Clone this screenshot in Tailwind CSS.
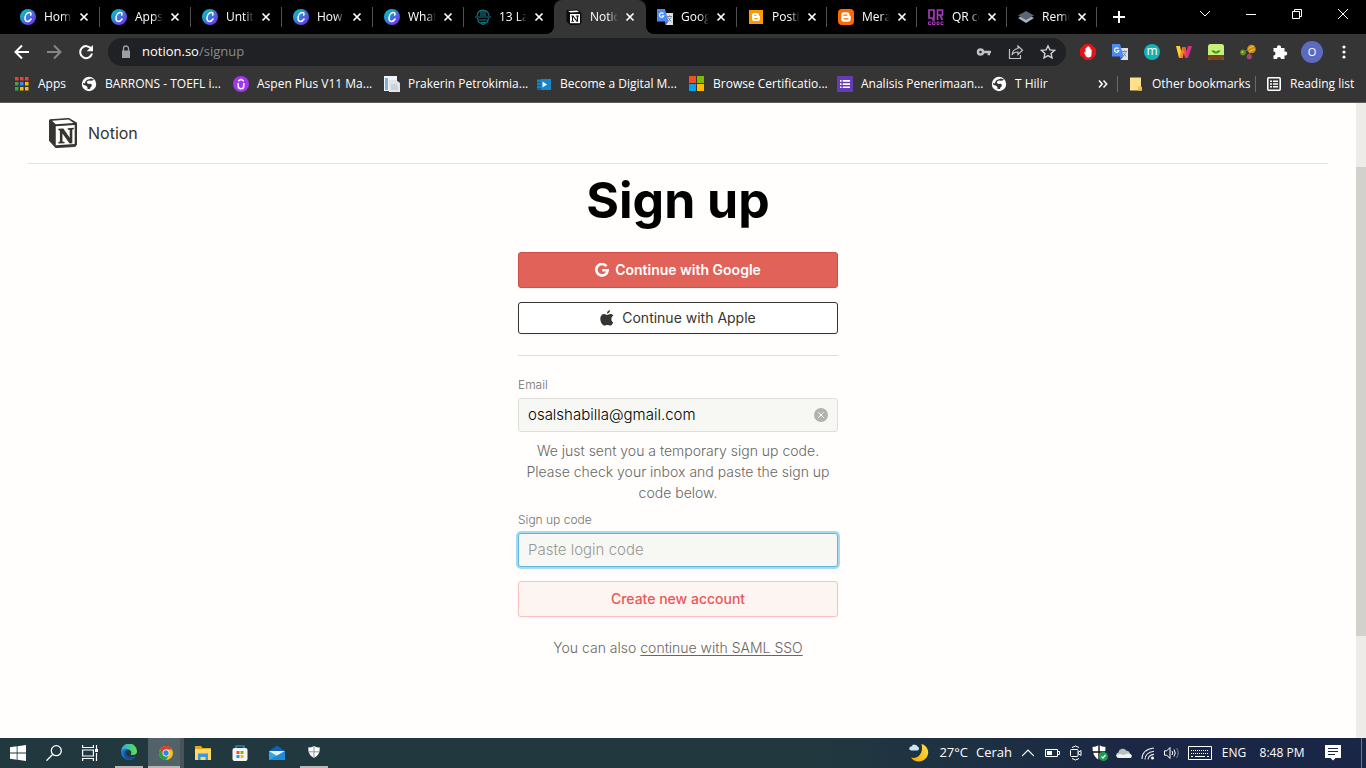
<!DOCTYPE html>
<html lang="en">
<head>
<meta charset="utf-8">
<meta name="viewport" content="width=device-width, initial-scale=1">
<title>Notion – Sign up</title>
<script src="https://cdn.jsdelivr.net/npm/@tailwindcss/browser@4"></script>
</head>
<body class="h-screen flex flex-col overflow-hidden bg-[#fffefc] font-['Open_Sans',sans-serif] text-xs text-white">

<!-- Shared icon symbols -->
<svg class="absolute size-0" aria-hidden="true">
  <defs>
    <linearGradient id="canva" x1="0" y1="0" x2="1" y2="1"><stop offset="0.1" stop-color="#00c4cc"/><stop offset="0.9" stop-color="#7d2ae8"/></linearGradient>
    <linearGradient id="edge" x1="0" y1="0" x2="1" y2="0"><stop offset="0" stop-color="#2aa7e0"/><stop offset="1" stop-color="#5fe04f"/></linearGradient>
    <linearGradient id="moon" x1="1" y1="0" x2="0" y2="1"><stop offset="0" stop-color="#ffe24a"/><stop offset="1" stop-color="#f5a800"/></linearGradient>
    <symbol id="i-canva" viewBox="0 0 16 16"><circle cx="8" cy="8" r="8" fill="url(#canva)"/><path d="M10.700 6.200c1-1.700-.1-3-1.700-2.700C6.600 3.900 5 6.700 5 9.200c0 4 3.800 4.200 6.100.8" fill="none" stroke="#fff" stroke-width="1.500" stroke-linecap="round"/></symbol>
    <symbol id="i-x" viewBox="0 0 16 16"><path d="M4.500 4.500l7 7M11.500 4.500l-7 7" stroke="#fff" stroke-width="1.700" fill="none"/></symbol>
    <symbol id="i-translate" viewBox="0 0 16 16"><path d="M6 4h10v12H9z" fill="#dcdfe3"/><path d="M0 0h8l3.500 12.500H0z" fill="#4b8bf5"/><path d="M8.500 16l3-3.500H7.500z" fill="#3367d6"/><path d="M6.500 4.800a2.200 2.200 0 1 0 .3 2H4.800" fill="none" stroke="#fff" stroke-width="1.100"/><path d="M10 7.500h5M12.500 6.500v1M11 8.500l3 4M14 8.500l-3 4" stroke="#74869a" fill="none"/></symbol>
    <symbol id="i-globe" viewBox="0 0 16 16"><circle cx="8" cy="8" r="7.200" fill="#fff"/><path d="M13 3.500Q11 5.500 8.500 4.500 5.500 4.500 6 7q1 1.200 3 .8 2.500.2 1.500 2.700-1.500.5-1.500 2.500L6.500 13q.5-2-1-3L2 8.500V7l2 .5Q4 4 8 3.200l2-.7z" fill="#353535"/></symbol>
    <symbol id="i-notion" viewBox="1 1 28 29"><path d="M2.500 2.800L20.500 1.500l7.500 4.300v20.700l-1.500 2L8 29.500l-6-6.500V3.300z" fill="#37352f" stroke="#37352f" stroke-linejoin="round"/><path d="M4.500 3.600l16-1.100 4.800 3.300L8 7z" fill="#fff"/><path d="M8 9l18.300-1.200v18.400L8 27.300z" fill="#fff"/><path d="M10.500 11.500l4.800-.3 6.200 9V12.500l-2-.500v-1.200l6-.300v1.200l-1.500.700v13l-2.700.300-6.800-9.700v7.700l2 .500v1.200l-6 .300v-1.200l1.500-.700V13.300l-1.500-.600z" fill="#37352f"/></symbol>
  </defs>
</svg>

<!-- Tab strip -->
<header class="shrink-0">
  <div class="flex h-[34px] bg-black pl-[9px]">
    <div role="tablist" class="flex">
      <div role="tab" class="flex w-[91px] items-center pl-[11px]"><svg class="size-4 shrink-0"><use href="#i-canva"/></svg><span class="ml-2 w-7 overflow-hidden whitespace-nowrap mask-r-from-65% mask-r-to-100%">Home</span><button aria-label="Close tab" class="ml-1"><svg class="size-4"><use href="#i-x"/></svg></button><span class="ml-[7px] h-5 w-px bg-[#505050]"></span></div>
      <div role="tab" class="flex w-[91px] items-center pl-[11px]"><svg class="size-4 shrink-0"><use href="#i-canva"/></svg><span class="ml-2 w-7 overflow-hidden whitespace-nowrap mask-r-from-65% mask-r-to-100%">Apps</span><button aria-label="Close tab" class="ml-1"><svg class="size-4"><use href="#i-x"/></svg></button><span class="ml-[7px] h-5 w-px bg-[#505050]"></span></div>
      <div role="tab" class="flex w-[91px] items-center pl-[11px]"><svg class="size-4 shrink-0"><use href="#i-canva"/></svg><span class="ml-2 w-7 overflow-hidden whitespace-nowrap mask-r-from-65% mask-r-to-100%">Untitled</span><button aria-label="Close tab" class="ml-1"><svg class="size-4"><use href="#i-x"/></svg></button><span class="ml-[7px] h-5 w-px bg-[#505050]"></span></div>
      <div role="tab" class="flex w-[91px] items-center pl-[11px]"><svg class="size-4 shrink-0"><use href="#i-canva"/></svg><span class="ml-2 w-7 overflow-hidden whitespace-nowrap mask-r-from-65% mask-r-to-100%">How</span><button aria-label="Close tab" class="ml-1"><svg class="size-4"><use href="#i-x"/></svg></button><span class="ml-[7px] h-5 w-px bg-[#505050]"></span></div>
      <div role="tab" class="flex w-[91px] items-center pl-[11px]"><svg class="size-4 shrink-0"><use href="#i-canva"/></svg><span class="ml-2 w-7 overflow-hidden whitespace-nowrap mask-r-from-65% mask-r-to-100%">What</span><button aria-label="Close tab" class="ml-1"><svg class="size-4"><use href="#i-x"/></svg></button><span class="ml-[7px] h-5 w-px bg-[#505050]"></span></div>
      <div role="tab" class="flex w-[90px] items-center pl-[11px]"><svg class="size-4 shrink-0" viewBox="0 0 16 16" fill="none" stroke="#17788a" stroke-width="1.100"><path d="M2 7a6 6 0 0 1 12 0M0 8h16M6 2v5M8 1v6M10 2v5M2.500 9l1 4L8 15.500l4.500-2.500 1-4M4 11h8M6 13.500h4"/></svg><span class="ml-2 w-7 overflow-hidden whitespace-nowrap mask-r-from-65% mask-r-to-100%">13 Lang</span><button aria-label="Close tab" class="ml-1"><svg class="size-4"><use href="#i-x"/></svg></button></div>
      <div role="tab" aria-selected="true" class="relative flex w-[92px] items-center rounded-t-lg bg-[#353535] pl-3"><svg class="absolute bottom-0 -left-2 size-2" viewBox="0 0 8 8"><path d="M8 0v8H0a8 8 0 0 0 8-8z" fill="#353535"/></svg><svg class="absolute bottom-0 -right-2 size-2" viewBox="0 0 8 8"><path d="M0 0v8h8a8 8 0 0 1-8-8z" fill="#353535"/></svg><svg class="size-4 shrink-0" viewBox="0 0 16 16"><path d="M1 1.500L11 1l3 2 1 1v10l-1 1-10 .500-3-3z" fill="#0c0c0c" stroke="#0c0c0c"/><path d="M2 2l9-.500L13 3 4.500 3.500z" fill="#fff"/><path d="M4 5h10v9.200H4z" fill="#fff"/><path d="M5.300 6.500h2l3.500 4.800V7.500h-1v-1h3v1h-.7v5.200h-1.500L7 8v3.700h1v1H5.300v-1H6V7.500h-.7z" fill="#111"/></svg><span class="ml-2 w-7 overflow-hidden whitespace-nowrap mask-r-from-65% mask-r-to-100%">Notion</span><button aria-label="Close tab" class="ml-1"><svg class="size-4"><use href="#i-x"/></svg></button></div>
      <div role="tab" class="flex w-[91px] items-center pl-[11px]"><svg class="size-4 shrink-0"><use href="#i-translate"/></svg><span class="ml-2 w-7 overflow-hidden whitespace-nowrap mask-r-from-65% mask-r-to-100%">Google</span><button aria-label="Close tab" class="ml-1"><svg class="size-4"><use href="#i-x"/></svg></button><span class="ml-[7px] h-5 w-px bg-[#505050]"></span></div>
      <div role="tab" class="flex w-[90px] items-center pl-[11px]"><svg class="size-4 shrink-0" viewBox="0 0 16 16"><path d="M1 1h14v14H1z" fill="#f90"/><path d="M4 6a2 2 0 0 1 2-2h3a2 2 0 0 1 2 2v.700h.500q.5 0 .5.500V10a2 2 0 0 1-2 2H6a2 2 0 0 1-2-2z" fill="#fff"/><path d="M6.300 6.300h2M6.300 9.700h3.400" stroke="#f90" stroke-width="1.200"/></svg><span class="ml-2 w-7 overflow-hidden whitespace-nowrap mask-r-from-65% mask-r-to-100%">Posting</span><button aria-label="Close tab" class="ml-1"><svg class="size-4"><use href="#i-x"/></svg></button><span class="ml-1.5 h-5 w-px bg-[#505050]"></span></div>
      <div role="tab" class="flex w-[90px] items-center pl-[11px]"><svg class="size-4 shrink-0" viewBox="0 0 16 16"><rect width="16" height="16" rx="4" fill="#ff6a00"/><path d="M3.300 6A2.700 2.700 0 0 1 6 3.300h3A2.500 2.500 0 0 1 11.500 6v.700h.700q.5 0 .5.500V10A2.700 2.700 0 0 1 10 12.700H6A2.700 2.700 0 0 1 3.300 10z" fill="#fff"/><path d="M6 6.200h2.800M6 9.800h4" stroke="#ff6a00" stroke-width="1.300" stroke-linecap="round"/></svg><span class="ml-2 w-7 overflow-hidden whitespace-nowrap mask-r-from-65% mask-r-to-100%">Merangkai</span><button aria-label="Close tab" class="ml-1"><svg class="size-4"><use href="#i-x"/></svg></button><span class="ml-1.5 h-5 w-px bg-[#505050]"></span></div>
      <div role="tab" class="flex w-[90px] items-center pl-[11px]"><svg class="size-4 shrink-0" viewBox="0 0 16 16" fill="none" stroke="#a63bbd"><path d="M1 1h5v8H1zM5 9v2h2M9.500 11V1h5v5h-5M12 6l2.500 5" stroke-width="1.700"/><path d="M3 13H.500v2.500H3M4.500 13H7v2.500H4.500zM9 13v2.500h2V13zM15.500 13H13v2.500h2.500"/></svg><span class="ml-2 w-7 overflow-hidden whitespace-nowrap mask-r-from-65% mask-r-to-100%">QR code</span><button aria-label="Close tab" class="ml-1"><svg class="size-4"><use href="#i-x"/></svg></button><span class="ml-1.5 h-5 w-px bg-[#505050]"></span></div>
      <div role="tab" class="flex w-[90px] items-center pl-[11px]"><svg class="size-4 shrink-0" viewBox="0 0 16 16"><path d="M0 9l8-4 8 4-8 5z" fill="#a9b4bd"/><path d="M0 6.500L8 2l8 4.500-8 4.500z" fill="#596773"/></svg><span class="ml-2 w-7 overflow-hidden whitespace-nowrap mask-r-from-65% mask-r-to-100%">Remove</span><button aria-label="Close tab" class="ml-1"><svg class="size-4"><use href="#i-x"/></svg></button><span class="ml-1.5 h-5 w-px bg-[#505050]"></span></div>
    </div>
    <button aria-label="New tab" class="ml-3.5"><svg class="size-4" viewBox="0 0 16 16"><path d="M8 2v12M2 8h12" stroke="#fff" stroke-width="2"/></svg></button>
    <div class="ml-auto flex h-7">
      <button aria-label="Search tabs" class="flex w-[46px] items-center justify-center"><svg class="size-3" viewBox="0 0 12 12"><path d="M1 3l5 5 5-5" fill="none" stroke="#fff"/></svg></button>
      <button aria-label="Minimize" class="flex w-[46px] items-center justify-center"><svg class="size-3" viewBox="0 0 12 12"><path d="M1 6.500h10" stroke="#fff"/></svg></button>
      <button aria-label="Restore" class="flex w-[46px] items-center justify-center"><svg class="size-3" viewBox="0 0 12 12" fill="none" stroke="#fff"><path d="M1.500 3.500h7v7h-7zM3.500 3.500v-2h7v7h-2"/></svg></button>
      <button aria-label="Close" class="flex w-[46px] items-center justify-center"><svg class="size-3" viewBox="0 0 12 12"><path d="M1 1l10 10M11 1L1 11" stroke="#fff"/></svg></button>
    </div>
  </div>

  <!-- Toolbar -->
  <div class="flex h-9 items-center bg-[#353535] pr-1.5 pl-1.5">
    <button aria-label="Back" class="flex w-8 justify-center"><svg class="size-4" viewBox="0 0 16 16" fill="none" stroke="#fff" stroke-width="2"><path d="M15 8H2M8 1.500L1.500 8 8 14.500"/></svg></button>
    <button aria-label="Forward" class="flex w-8 justify-center"><svg class="size-4" viewBox="0 0 16 16" fill="none" stroke="#868686" stroke-width="2"><path d="M1 8h13M8 1.500L14.500 8 8 14.500"/></svg></button>
    <button aria-label="Reload" class="flex w-8 justify-center"><svg class="size-4" viewBox="0 0 16 16"><path d="M13.300 5A6 6 0 1 0 14 9.500" fill="none" stroke="#fff" stroke-width="2"/><path d="M15 1v6.300H8.700z" fill="#fff"/></svg></button>
    <div class="ml-1.5 flex h-7 flex-1 items-center rounded-full bg-[#202124] pl-2.5 pr-0.5">
      <svg class="size-4" viewBox="0 0 16 16"><path d="M4 6.500h8V14H4z" fill="#9aa0a6"/><path d="M5.500 7V4.500a2.500 2.500 0 0 1 5 0V7" fill="none" stroke="#9aa0a6" stroke-width="1.300"/></svg>
      <a href="#" class="ml-2 flex-1 text-[13px]">notion.so<span class="text-[#8a8b8e]">/signup</span></a>
      <button aria-label="Passwords" class="flex w-8 justify-center"><svg class="size-4" viewBox="0 0 16 16" fill="none" stroke="#bfc1c4"><circle cx="4.500" cy="8" r="2.500" stroke-width="2.500"/><path d="M7 8h8M12.800 8v3.200" stroke-width="2.400"/></svg></button>
      <button aria-label="Share" class="flex w-8 justify-center"><svg class="size-4" viewBox="0 0 16 16" fill="none" stroke="#bfc1c4" stroke-width="1.200"><path d="M1.500 5v9.500h11V11"/><path d="M10 2l4.500 4.200L10 10.500V8C7 8 5 9 4 11c.3-3.500 2.500-6 6-6.500z"/></svg></button>
      <button aria-label="Bookmark" class="flex w-8 justify-center"><svg class="size-4" viewBox="0 0 16 16" fill="none" stroke="#d0d1d3" stroke-width="1.400"><path d="M8 1.800l1.900 4.100 4.500.500-3.300 3 .9 4.400-4-2.200-4 2.200.9-4.400-3.300-3 4.500-.500z"/></svg></button>
    </div>
    <div class="ml-1.5 flex items-center">
      <button aria-label="Ad blocker" class="flex w-8 justify-center"><svg class="size-4" viewBox="0 0 16 16"><path d="M5 0h6l5 5v6l-5 5H5l-5-5V5z" fill="#e4141b"/><path d="M4 8l1.500.600V4.300q.6-.8 1.100 0V3q.6-.8 1.200 0V2.500q.7-.7 1.300 0V3.500q.7-.7 1.300 0V5.500q.7-.6 1.200 0V10q0 3.500-3.300 3.500Q5.700 13.500 4 8z" fill="#fff"/></svg></button>
      <button aria-label="Translate" class="flex w-8 justify-center"><svg class="size-4"><use href="#i-translate"/></svg></button>
      <button aria-label="Mendeley" class="flex w-8 justify-center"><span class="size-4 rounded-full bg-[#12b3b6] text-center text-xs/[14px]">m</span></button>
      <button aria-label="Wizard" class="flex w-8 justify-center"><svg class="size-4" viewBox="0 0 16 16"><path d="M0 2h4l2.500 12H3z" fill="#fdd32a"/><path d="M3 14l3.500-11h3L6.500 14z" fill="#f58a2c"/><path d="M6.500 3h3L12 14H9z" fill="#f4552f"/><path d="M9 14l3-12h4l-4 12z" fill="#df2d8d"/></svg></button>
      <button aria-label="Garden" class="flex w-8 justify-center"><svg class="size-4" viewBox="0 0 16 16"><rect width="16" height="16" rx="2.500" fill="#c6ef7b"/><path d="M0 11h16v2.500a2.500 2.500 0 0 1-2.500 2.500h-11A2.500 2.500 0 0 1 0 13.500z" fill="#7d4517"/><path d="M8 10.500V9C6 9.300 4.500 8.300 3.800 6.800 6 6.500 7.500 7 8 8.300c.5-1.300 2-1.800 4.200-1.500C11.500 8.300 10 9.300 8 9" fill="#3f8f1e" stroke="#3f8f1e" stroke-width=".5"/></svg></button>
      <button aria-label="Molecule" class="flex w-8 justify-center"><svg class="size-4" viewBox="0 0 16 16"><path d="M3 9l7-5-1 8" fill="none" stroke="#777"/><circle cx="11.500" cy="5" r="4.300" fill="#cf8c16"/><path d="M8.500 4.500l5-2.500M9.500 7.500l5-2.500" stroke="#f4c65a"/><circle cx="3" cy="8.500" r="2.900" fill="#5d8d1c"/><circle cx="2.500" cy="8" r="1" fill="#b4dd64"/><circle cx="9.300" cy="12.700" r="2.600" fill="#a5486f"/></svg></button>
      <button aria-label="Extensions" class="flex w-8 justify-center"><svg class="size-4" viewBox="0 0 16 16"><path d="M1.500 4H5a2.100 2.100 0 1 1 4 0h3.500v3.500a2.100 2.100 0 1 1 0 4V15H9a2 2 0 0 0-4 0H1.500v-3.500a2 2 0 0 0 0-4z" fill="#fff"/></svg></button>
      <button aria-label="Profile" class="flex w-8 justify-center"><span class="size-[22px] rounded-full bg-[#5c6bc0] text-center text-[11px]/[22px]">O</span></button>
      <button aria-label="Menu" class="flex w-8 justify-center"><svg class="size-4" viewBox="0 0 16 16" fill="#fff"><circle cx="8" cy="3" r="1.600"/><circle cx="8" cy="8" r="1.600"/><circle cx="8" cy="13" r="1.600"/></svg></button>
    </div>
  </div>

  <!-- Bookmarks -->
  <nav aria-label="Bookmarks" class="flex h-[33px] items-center border-b border-[#5c5c5c] bg-[#353535] pb-1 pl-3.5 pr-3.5 whitespace-nowrap">
    <a href="#" class="flex w-[51px] items-center gap-2"><svg class="size-4 shrink-0" viewBox="0 0 16 16"><path d="M1 1h3.500v3.500H1zM6 1h3.500v3.500H6zM11 1h3.500v3.500H11z" fill="#ea4335"/><path d="M1 6h3.500v3.500H1z" fill="#34a853"/><path d="M6 6h3.500v3.500H6z" fill="#4285f4"/><path d="M11 6h3.500v3.500H11zM6 11h3.500v3.500H6zM11 11h3.500v3.500H11z" fill="#fbbc05"/><path d="M1 11h3.500v3.500H1z" fill="#34a853"/></svg>Apps</a>
    <a href="#" class="ml-4 flex w-[136px] items-center gap-2"><svg class="size-4 shrink-0"><use href="#i-globe"/></svg>BARRONS - TOEFL i...</a>
    <a href="#" class="ml-4 flex w-[135px] items-center gap-2"><svg class="size-4 shrink-0" viewBox="0 0 16 16"><circle cx="8" cy="8" r="8" fill="#a435f0"/><path d="M5.200 7v3a2.800 2.800 0 0 0 5.600 0V7M5.200 5L8 3.300 10.800 5" fill="none" stroke="#fff" stroke-width="1.500"/></svg>Aspen Plus V11 Ma...</a>
    <a href="#" class="ml-4 flex w-[136px] items-center gap-2"><svg class="size-4 shrink-0" viewBox="0 0 16 16"><path d="M0 0h13v15H0z" fill="#f1f3f5"/><path d="M1 2h3v12H1z" fill="#79b2da"/><path d="M5 4h7l4 3v9H5z" fill="#e2e5e8"/><path d="M7 9h6M7 11h7M7 13h7" stroke="#b7bec5"/></svg>Prakerin Petrokimia...</a>
    <a href="#" class="ml-4 flex w-[137px] items-center gap-2"><svg class="size-4 shrink-0" viewBox="0 0 16 16"><path d="M1 3h14v11H1z" fill="#1686cb"/><path d="M1 3h4v11H1z" fill="#0e639c"/><path d="M1 5h4M1 8h4M1 11h4" stroke="#2aa1e6"/><path d="M6.500 5.500v6L11 8.500z" fill="#fff"/></svg>Become a Digital M...</a>
    <a href="#" class="ml-4 flex w-[132px] items-center gap-2"><svg class="size-4 shrink-0" viewBox="0 0 16 16"><path d="M0 0h7v7H0z" fill="#f25022"/><path d="M8 0h7v7H8z" fill="#7fba00"/><path d="M0 8h7v7H0z" fill="#00a4ef"/><path d="M8 8h7v7H8z" fill="#ffb900"/></svg>Browse Certificatio...</a>
    <a href="#" class="ml-4 flex w-[138px] items-center gap-2"><svg class="size-4 shrink-0" viewBox="0 0 16 16"><rect width="16" height="16" rx="1" fill="#673ab7"/><path d="M3 4h1.500v1.700H3zM3 7.200h1.500v1.700H3zM3 10.400h1.500V12H3zM5.700 4H13v1.700H5.700zM5.700 7.200H13v1.700H5.700zM5.700 10.400H13V12H5.700z" fill="#fff"/></svg>Analisis Penerimaan...</a>
    <a href="#" class="ml-4 flex items-center gap-2"><svg class="size-4 shrink-0"><use href="#i-globe"/></svg>T Hilir</a>
    <button aria-label="More bookmarks" class="ml-auto flex"><svg class="size-3" viewBox="0 0 12 12"><path d="M2 2.500L5.200 6 2 9.500M6.500 2.500L9.700 6 6.500 9.500" fill="none" stroke="#fff" stroke-width="1.500"/></svg></button>
    <span class="ml-2 h-4 w-px bg-[#6a6a6a]"></span>
    <a href="#" class="ml-2.5 flex w-[117px] items-center gap-2"><svg class="size-4 shrink-0" viewBox="0 0 16 16"><path d="M2 1.500h11v9l1 1v3H2z" fill="#ffe08a"/><path d="M10 14.500h4v-3l-1-1h-3z" fill="#f2c14e"/></svg>Other bookmarks</a>
    <span class="ml-2.5 h-4 w-px bg-[#6a6a6a]"></span>
    <a href="#" class="ml-2.5 flex w-[86px] items-center gap-2"><svg class="size-4 shrink-0" viewBox="0 0 16 16" fill="none" stroke="#fff"><rect x="1.800" y="1.800" width="12.400" height="12.400" rx="1" stroke-width="1.600"/><path d="M4 5.300h2M4 8h2M4 10.700h2M7 5.300h5M7 8h5M7 10.700h5" stroke-width="1.500"/></svg>Reading list</a>
  </nav>
</header>

<!-- Web page -->
<div class="flex min-h-0 flex-1 font-['Inter',sans-serif] text-[#37352f]">
  <div class="flex-1 px-7">
    <div class="flex h-[61px] items-center border-b border-[#e4e3e1] pl-5">
      <a href="#" class="flex items-center gap-2.5 text-base"><svg class="size-[30px]"><use href="#i-notion"/></svg>Notion</a>
    </div>
    <main class="mx-auto flex w-80 flex-col">
      <h1 class="mt-2 text-center text-[50px]/[56px] font-bold text-black">Sign up</h1>
      <button class="mt-6 flex h-9 items-center justify-center gap-1.5 rounded-[3px] border border-[#cd4f45] bg-[#e16259] text-sm font-semibold text-white shadow-xs"><svg class="size-3.5" viewBox="0 0 14 14"><path d="M11.500 3.200A5.700 5.700 0 1 0 12.700 7.300H7.300" fill="none" stroke="#fff" stroke-width="2.600"/></svg>Continue with Google</button>
      <button class="mt-3.5 flex h-8 items-center justify-center gap-2 rounded-[3px] border border-[#37352f] bg-white text-sm shadow-xs"><svg class="h-4 w-3.5" viewBox="0 0 14 16"><path d="M13.200 12.400c-.8 1.800-1.800 3.200-3 3.200-1.100 0-1.400-.700-2.800-.700s-1.800.700-2.800.700C2.500 15.600.300 12 .300 8.700c0-2.900 1.900-4.600 3.800-4.600 1.200 0 2.200.8 3 .8.700 0 1.900-.9 3.300-.9 1.300 0 2.400.7 3 1.600-2.800 1.700-2.500 5.500-.2 6.800zM7 3.700C6.900 1.900 8.300.300 10 .100 10.200 2 8.600 3.700 7 3.700z" fill="#37352f"/></svg>Continue with Apple</button>
      <hr class="mt-[21px] border-[#dddcda]">
      <form class="flex flex-col">
        <label for="email" class="mt-5 text-xs/[18px] font-light text-[#73726f]">Email</label>
        <div class="mt-1 flex h-[34px] items-center rounded-[3px] border border-[#dededb] bg-[#f7f8f4] px-[9px]">
          <input id="email" type="text" value="osalshabilla@gmail.com" class="min-w-0 flex-1 text-[15px] font-light text-black outline-none">
          <button type="button" aria-label="Clear email"><svg class="size-3.5" viewBox="0 0 14 14"><circle cx="7" cy="7" r="7" fill="#b2b2af"/><path d="M4.300 4.300l5.400 5.400M9.700 4.300L4.300 9.700" stroke="#fff"/></svg></button>
        </div>
        <p class="mt-2 text-center text-sm/[21px] font-light text-[#686764]">We just sent you a temporary sign up code. Please check your inbox and paste the sign up code below.</p>
        <label for="code" class="mt-2 text-xs/[18px] font-light text-[#73726f]">Sign up code</label>
        <input id="code" type="text" placeholder="Paste login code" class="mt-1 h-[34px] rounded-[3px] border border-[#5eb6dc] bg-[#f7f8f4] px-[9px] pb-0.5 text-[15px] font-light ring-2 ring-[#a5daf0] outline-none placeholder:text-[#989895]">
        <button type="button" class="mt-3.5 h-9 rounded-[3px] border border-[#f6c3bf] bg-[#fdf5f2] text-sm font-medium text-[#eb5757] shadow-xs">Create new account</button>
        <p class="mt-5 text-center text-sm/[21px] font-light text-[#686764]">You can also <a href="#" class="underline underline-offset-2">continue with SAML SSO</a></p>
      </form>
    </main>
  </div>
  <div class="flex w-2.5 flex-col bg-[#edece9]"><div class="basis-[10%]"></div><div class="basis-[74%] bg-[#d3d1cb]"></div></div>
</div>

<!-- Windows taskbar -->
<footer class="flex h-[30px] shrink-0 items-stretch bg-linear-to-r from-[#21383f] from-60% to-[#1a2645] to-85%">
  <div class="flex">
    <button aria-label="Start" class="flex w-9 items-center justify-center"><svg class="size-4" viewBox="0 0 16 16" fill="#fff"><path d="M0 2.300L6.700 1.300v6.200H0zM7.500 1.200L16 0v7.500H7.500zM0 8.400h6.700v6.300L0 13.700zM7.500 8.400H16V16l-8.500-1.200z"/></svg></button>
    <button aria-label="Search" class="flex w-9 items-center justify-center"><svg class="size-4" viewBox="0 0 16 16" fill="none" stroke="#fff" stroke-width="1.300"><circle cx="10.300" cy="5.700" r="5"/><path d="M6.800 9.300L.500 15.700"/></svg></button>
    <button aria-label="Task view" class="flex w-9 items-center justify-center"><svg class="size-4" viewBox="0 0 16 16" fill="none" stroke="#fff" stroke-width="1.200"><path d="M.600 0v2.500h10.800V0M.600 16v-2.500h10.800V16M.600 5h10.800v6H.600zM14.500 0v4M14.500 8v8"/><path d="M13 4h3v3h-3z" fill="#fff" stroke="none"/></svg></button>
  </div>
  <div class="ml-[3px] flex gap-px">
    <button aria-label="Edge" class="flex w-9 flex-col items-center justify-end gap-1.5"><svg class="size-4" viewBox="0 0 16 16"><path d="M0 8a8 8 0 0 1 16-1c.2 2.500-1.800 4-4 4-2 0-2.800-.7-2-1.500C11 8 9.500 5.500 7 5.500S1.500 6 0 8z" fill="url(#edge)"/><path d="M0 8c1-3 4-4 6.500-3C5 6 4.500 8 5 10c.8 3 4.500 4.700 9.500 2.500C11.500 17 6 17 3 14 1 12.500 0 10.500 0 8z" fill="#1478cd"/><path d="M5 10c-.3-2 .4-4 2-5-3 1-4.500 4-4 6.500.4 2.500 3 4.500 6 4.300 2.500-.2 4.500-1.500 5.500-3.300C10 14.500 5.800 13 5 10z" fill="#0c509c"/></svg><span class="h-0.5 w-7 bg-[#b7b7b4]"></span></button>
    <button aria-label="Chrome" class="flex w-9 border-r-4 border-[#4a5357] bg-[#516268]"><span class="flex flex-1 flex-col items-center justify-end gap-1.5 self-stretch"><svg class="ml-1 size-3.5" viewBox="0 0 15 15"><circle cx="7.500" cy="7.500" r="7.500" fill="#fbc116"/><path d="M1 3.750A7.500 7.500 0 0 1 14 3.750H7.500L4.250 9.400z" fill="#e33b2e"/><path d="M1 3.750A7.500 7.500 0 0 0 7.500 15L10.750 9.400H4.250z" fill="#1fa04b"/><circle cx="7.500" cy="7.500" r="3.700" fill="#fff"/><circle cx="7.500" cy="7.500" r="2.900" fill="#3b7de9"/></svg><span class="h-0.5 w-full bg-[#b7b7b4]"></span></span></button>
    <button aria-label="File Explorer" class="flex w-9 items-center justify-center"><svg class="size-4" viewBox="0 0 16 16"><path d="M0 1h6l1.500 2H16v12H0z" fill="#e8a516"/><path d="M0 4h16v11H0z" fill="#ffd965"/><path d="M3 8.500h10V15h-2.500v-3h-5v3H3z" fill="#3d98df"/></svg></button>
    <button aria-label="Microsoft Store" class="flex w-9 items-center justify-center"><svg class="size-4" viewBox="0 0 16 16"><path d="M4 4V1h8v3" fill="none" stroke="#2aa6e2" stroke-width="1.200"/><rect x=".500" y="3" width="15" height="13" rx="2" fill="#f5f5f5"/><path d="M4.500 6h3v3h-3z" fill="#f25022"/><path d="M8.500 6h3v3h-3z" fill="#7fba00"/><path d="M4.500 10h3v3h-3z" fill="#00a4ef"/><path d="M8.500 10h3v3h-3z" fill="#ffb900"/></svg></button>
    <button aria-label="Mail" class="flex w-9 items-center justify-center"><svg class="size-4" viewBox="0 0 16 16"><path d="M0 6l8-5.500L16 6z" fill="#1160b7"/><path d="M0 6h16v9H0z" fill="#2ea7ee"/><path d="M0 6h16L8 11z" fill="#e9f4fb"/><path d="M0 15l16-9v9z" fill="#1a8ddd"/></svg></button>
    <button aria-label="Windows Security" class="flex w-9 flex-col items-center justify-end gap-2"><svg class="size-3" viewBox="0 0 12 12"><path d="M6 0q2.500 1.500 5.800 1.500Q12 9.500 6 12 0 9.500.200 1.500 3.500 1.500 6 0z" fill="#fff"/><path d="M6 0v12M0 5.800h12" stroke="#8a979c"/></svg><span class="h-0.5 w-7 bg-[#b7b7b4]"></span></button>
  </div>
  <div class="ml-auto flex">
    <button class="flex items-center text-[13px] whitespace-nowrap"><svg class="mr-2.5 size-5" viewBox="0 0 20 20"><path d="M12.500 1C19 3 21 9.500 17.500 14.500 14 19.500 5.500 20 2 14.500 8 16.500 15 11 12.500 1z" fill="url(#moon)"/><path d="M2 7.500a2 2 0 0 1 .5-4Q4 .500 6.500 2q1.500-.3 2 1.500 2 .500 1.500 2.500-.5 1.500-2 1.500z" fill="#cbe5f5"/></svg><span class="mr-2">27°C</span>Cerah</button>
    <button aria-label="Show hidden icons" class="ml-1 flex w-6 items-center justify-center"><svg class="size-3" viewBox="0 0 12 12"><path d="M0 9l6-6 6 6" fill="none" stroke="#fff" stroke-width="1.200"/></svg></button>
    <button aria-label="Battery" class="flex w-6 items-center justify-center"><svg class="size-4" viewBox="0 0 16 16"><path d="M1.500 4.500h12v7h-12zM13.500 6.500h2v3h-2" fill="none" stroke="#fff"/><path d="M3 6h5v4H3z" fill="#fff"/></svg></button>
    <button aria-label="Meet now" class="flex w-6 items-center justify-center"><svg class="size-4" viewBox="0 0 16 16" fill="none" stroke="#fff"><rect x="2.500" y="4.500" width="7.500" height="7" rx="1"/><path d="M10 7.500l3-2v5l-3-2M4 2.500Q7.500-.500 11 2.500M4 13.500q3.500 3 7 0"/></svg></button>
    <button aria-label="Security" class="flex w-6 items-center justify-center"><svg class="size-4" viewBox="0 0 16 16"><path d="M7 0q3 1.800 6.500 2 .5 9-6.500 13Q0 11 .500 2 4 1.800 7 0z" fill="#fff"/><path d="M7 0v15M0 7h14" stroke="#111" stroke-width="1.400"/><circle cx="11.500" cy="11.500" r="4.500" fill="#14a050"/><path d="M9.500 11.500l1.500 1.500 2.500-3" fill="none" stroke="#fff" stroke-width="1.200"/></svg></button>
    <button aria-label="OneDrive" class="flex w-6 items-center justify-center"><svg class="size-4" viewBox="0 0 16 16"><path d="M2.500 13a2.800 2.800 0 0 1-.2-5.500 4.500 4.500 0 0 1 8.200-1.700A3.600 3.600 0 0 1 14 9.200a2 2 0 0 1-.3 3.800z" fill="#bcbfc2"/><path d="M3 13q-2.500-.5-2.700-2.500Q3 8 7 10l5-1.500q3.800.2 3.800 2.500T13.500 13z" fill="#f2f2f2"/></svg></button>
    <button aria-label="Wi-Fi" class="flex w-6 items-center justify-center"><svg class="size-4" viewBox="0 0 16 16" fill="none" stroke="#e2e5e8" stroke-width="1.100"><path d="M2 14Q2 4.500 14 3M5 14.500Q5 7.500 14 6.200M8 14.500Q8.500 10 14 9.400"/><circle cx="12.500" cy="13" r="1.500" fill="#fff" stroke="none"/></svg></button>
    <button aria-label="Volume" class="flex w-6 items-center justify-center"><svg class="size-4" viewBox="0 0 16 16" fill="none" stroke="#fff"><path d="M.500 5.800h2.300L6 2.500v11l-3.200-3.300H.500zM8 6q1.500 2 0 4M10 4.500q2.500 3.500 0 7"/><path d="M12.500 3q3.500 5 0 10" stroke="#76829b"/></svg></button>
    <button aria-label="Touch keyboard" class="flex w-8 items-center justify-center"><svg class="h-3.5 w-6" viewBox="0 0 24 14" fill="none" stroke="#fff"><path d="M.500.500h23v13H.500z"/><path d="M3 4.500h18M3 7.500h18" stroke-dasharray="1 1"/><path d="M3 10.500h2M7 10.500h10M19 10.500h2"/></svg></button>
    <button class="w-9 text-center">ENG</button>
    <button class="w-15 text-center whitespace-nowrap">8:48 PM</button>
    <button aria-label="Notifications" class="flex w-[42px] items-center justify-center"><svg class="size-4" viewBox="0 0 16 16"><path d="M0 0h16v13h-5.500L8 15.500 5.500 13H0z" fill="#fff"/><path d="M3 3.500h10M3 6.500h10M3 9.500h7" stroke="#1a2645" stroke-width="1.200"/></svg></button>
    <button aria-label="Show desktop" class="ml-[7px] w-[5px] border-l border-[#6d7689]"></button>
  </div>
</footer>
</body>
</html>
